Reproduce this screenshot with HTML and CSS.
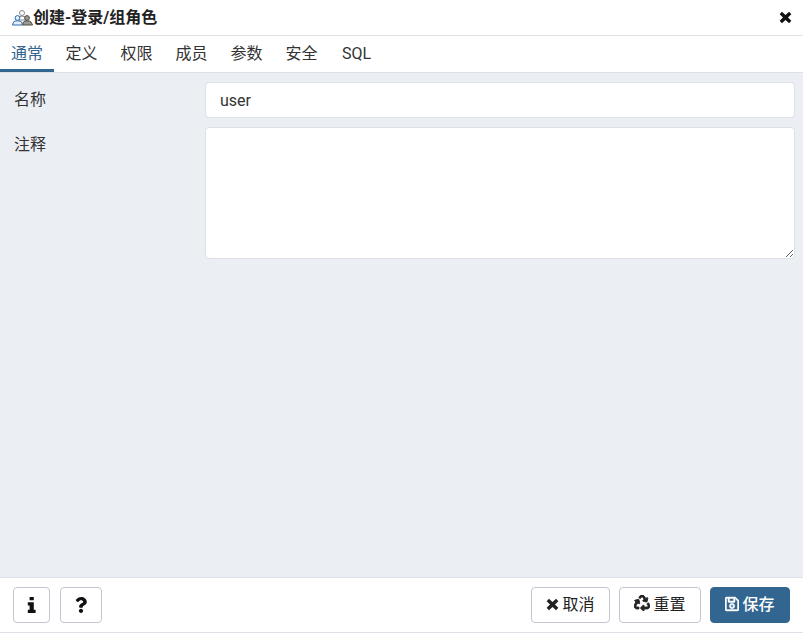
FILE: index.html
```html
<!DOCTYPE html>
<html lang="zh">
<head>
<meta charset="utf-8">
<title>创建-登录/组角色</title>
<link rel="stylesheet" href="styles.css">
</head>
<body>
<div class="dialog">
  <header class="title-bar">
    <div class="title">
      <svg class="role-icon" width="21" height="16" viewBox="0 0 21 16">
        <circle cx="10" cy="3" r="2.500" fill="#fff" stroke="#8a8a8a"/>
        <path d="M5.500 10 Q6 6 10 6 Q14 6 14.500 10Z" fill="#fff" stroke="#8a8a8a"/>
        <circle cx="5.500" cy="8" r="2.400" fill="#e3eefa" stroke="#2f6cad"/>
        <path d="M.5 15 L1.500 12 Q2.500 10.800 5.500 10.800 Q8.500 10.800 9.500 12 L10.500 15Z" fill="#e3eefa" stroke="#2f6cad"/>
        <circle cx="15" cy="8" r="2.400" fill="#9a9a8e" stroke="#4f4f49"/>
        <path d="M10.500 15 L11.500 12 Q12.500 10.800 15 10.800 Q18 10.800 19 12 L20.500 15Z" fill="#9a9a8e" stroke="#4f4f49"/>
      </svg>
      <span>创建-登录/组角色</span>
    </div>
    <svg class="close-icon" width="13" height="13" viewBox="0 0 12 12"><path d="M2.700.8 6 3.800 9.300.8 11.400 2.900 8.300 6 11.400 9.100 9.300 11.200 6 8.200 2.700 11.200.6 9.100 3.700 6 .6 2.900Z"/></svg>
  </header>
  <nav class="tabs">
    <a class="tab active">通常</a>
    <a class="tab">定义</a>
    <a class="tab">权限</a>
    <a class="tab">成员</a>
    <a class="tab">参数</a>
    <a class="tab">安全</a>
    <a class="tab">SQL</a>
  </nav>
  <main class="content">
    <div class="field">
      <label class="field-label">名称</label>
      <input class="control input" type="text" value="user">
    </div>
    <div class="field">
      <label class="field-label">注释</label>
      <textarea class="control textarea"></textarea>
    </div>
  </main>
  <footer class="footer">
    <div class="btn-group btn-group-left">
      <button class="btn info-btn"><svg width="10" height="16" viewBox="0 0 10 16"><path d="M2.600 0h4.200v3.200H2.600zM.8 5.200h6v7.600h1.800V16H.8v-3.200h1.800V8.400H.8z"/></svg></button>
      <button class="btn help-btn"><svg width="12" height="16" viewBox="0 0 384 512"><path d="M202.021 0C122.202 0 70.503 32.703 29.914 91.026c-7.363 10.58-5.093 25.086 5.178 32.874l43.138 32.709c10.373 7.865 25.132 6.026 33.253-4.148 25.049-31.381 43.63-49.449 82.757-49.449 30.764 0 68.816 19.799 68.816 49.631 0 22.552-18.617 34.134-48.993 51.164-35.423 19.86-82.299 44.576-82.299 106.405V320c0 13.255 10.745 24 24 24h72.471c13.255 0 24-10.745 24-24v-5.773c0-42.86 125.268-44.645 125.268-160.627C377.504 66.256 286.902 0 202.021 0zM192 373.459c-38.196 0-69.271 31.075-69.271 69.271 0 38.195 31.075 69.27 69.271 69.27s69.271-31.075 69.271-69.271-31.075-69.27-69.271-69.27z"/></svg></button>
    </div>
    <div class="btn-group btn-group-right">
      <button class="btn cancel-btn"><svg class="btn-icon" width="13" height="13" viewBox="0 0 12 12"><path d="M2.700.8 6 3.800 9.300.8 11.400 2.900 8.300 6 11.400 9.100 9.300 11.200 6 8.200 2.700 11.200.6 9.100 3.700 6 .6 2.900Z"/></svg><span class="btn-text">取消</span></button>
      <button class="btn reset-btn"><svg class="btn-icon recycle-icon" width="16" height="16" viewBox="0 0 512 512"><path d="M184.561 261.903c3.232 13.997-12.123 24.635-24.068 17.168l-40.736-25.455-50.867 81.402C55.606 356.273 70.96 384 96.012 384H148c6.627 0 12 5.373 12 12v40c0 6.627-5.373 12-12 12H96.115c-75.334 0-121.302-83.048-81.408-146.88l50.822-81.388-40.725-25.448c-12.081-7.547-8.966-25.961 4.879-29.158l110.237-25.45c8.611-1.988 17.201 3.381 19.189 11.99l25.452 110.237zm98.561-182.915l41.289 66.076-40.74 25.457c-12.051 7.528-9 25.953 4.879 29.158l110.237 25.45c8.672 1.999 17.215-3.438 19.189-11.99l25.45-110.237c3.197-13.844-11.99-24.719-24.068-17.168l-40.687 25.424-41.263-66.082c-37.521-60.033-125.209-60.171-162.816 0l-17.963 28.766c-3.51 5.62-1.8 13.021 3.82 16.533l33.919 21.195c5.62 3.512 13.024 1.803 16.536-3.817l17.961-28.743c12.712-20.341 41.973-19.676 54.257-.022zM497.288 301.12l-27.515-44.065c-3.511-5.623-10.916-7.334-16.538-3.821l-33.861 21.159c-5.62 3.512-7.33 10.915-3.818 16.536l27.564 44.112c13.257 21.211-2.057 48.96-27.136 48.96H320V336.02c0-14.213-17.242-21.383-27.313-11.313l-80 79.981c-6.249 6.248-6.249 16.379 0 22.627l80 79.989C302.689 517.308 320 510.3 320 495.989V448h95.88c75.274 0 121.335-82.997 81.408-146.88z"/></svg><span class="btn-text">重置</span></button>
      <button class="btn save-btn"><svg class="btn-icon save-icon" width="14" height="16" viewBox="0 0 448 512"><path d="M433.941 129.941l-83.882-83.882A48 48 0 0 0 316.118 32H48C21.49 32 0 53.49 0 80v352c0 26.51 21.49 48 48 48h352c26.51 0 48-21.49 48-48V163.882a48 48 0 0 0-14.059-33.941zM272 80v80H144V80h128zm122 352H54a6 6 0 0 1-6-6V86a6 6 0 0 1 6-6h42v104c0 13.255 10.745 24 24 24h176c13.255 0 24-10.745 24-24V83.882l78.243 78.243a6 6 0 0 1 1.757 4.243V426a6 6 0 0 1-6 6zM224 232c-48.523 0-88 39.477-88 88s39.477 88 88 88 88-39.477 88-88-39.477-88-88-88zm0 128c-22.056 0-40-17.944-40-40s17.944-40 40-40 40 17.944 40 40-17.944 40-40 40z"/></svg><span class="btn-text">保存</span></button>
    </div>
  </footer>
</div>
</body>
</html>
```
FILE: styles.css
```css
* { box-sizing: border-box; }
html, body { margin: 0; height: 100%; }
body {
  font-family: Roboto, "Noto Sans CJK SC", sans-serif;
  font-size: 16px;
  color: #222;
  background: #fff;
  overflow: hidden;
}
.dialog {
  display: flex;
  flex-direction: column;
  height: 633px;
}
.title-bar {
  flex: none;
  height: 36px;
  display: flex;
  align-items: center;
  justify-content: space-between;
  padding: 0 11px 3px 12px;
  border-bottom: 1px solid #dde0e6;
  background: #fff;
}
.title {
  display: flex;
  align-items: center;
  font-weight: 700;
  font-size: 16px;
  color: #222;
}
.role-icon { flex: none; margin-top: 3px; }
.close-icon { fill: #111; flex: none; margin-top: 3px; }
.tabs {
  flex: none;
  height: 37px;
  display: flex;
  border-bottom: 1px solid #dde0e6;
  background: #fff;
}
.tab {
  width: 55px;
  padding-top: 7px;
  font-size: 16px;
  line-height: 22px;
  color: #333;
  text-align: center;
  white-space: nowrap;
}
.tab:first-child { width: 54px; }
.tab.active {
  color: #326690;
  border-bottom: 3px solid #326690;
}
.content {
  flex: 1;
  background: #ebeef3;
  padding: 9px 8px 0 14px;
  display: flex;
  flex-direction: column;
  gap: 9px;
}
.field { display: flex; }
.field-label {
  flex: none;
  width: 191px;
  font-size: 16px;
  line-height: 36px;
  color: #333;
}
.control {
  flex: 1;
  display: block;
  min-width: 0;
  border: 1px solid #dde0e6;
  border-radius: 4px;
  background: #fff;
  font-family: Roboto, "Noto Sans CJK SC", sans-serif;
  font-size: 16px;
  color: #333;
  outline: none;
}
.input { height: 36px; padding: 0 14px; }
.textarea { height: 132px; padding: 6px 14px; resize: vertical; }
.footer {
  flex: none;
  height: 56px;
  display: flex;
  align-items: center;
  justify-content: space-between;
  padding: 0 13px 1px;
  border-top: 1px solid #dde0e6;
  border-bottom: 1px solid #dde0e6;
  background: #fff;
}
.btn-group { display: flex; }
.btn-group-left { gap: 10px; }
.btn-group-right { gap: 9px; }
.btn {
  height: 36px;
  display: flex;
  align-items: center;
  justify-content: center;
  border: 1px solid #c3c6d1;
  border-radius: 4px;
  background: #fff;
  color: #222;
  font-family: Roboto, "Noto Sans CJK SC", sans-serif;
  font-size: 16px;
  padding: 0;
}
.btn svg { fill: currentColor; flex: none; }
.btn-icon { margin-right: 3px; }
.recycle-icon { margin-bottom: 4px; stroke: currentColor; stroke-width: 28; }
.save-icon { margin-bottom: 2px; stroke: currentColor; stroke-width: 14; }
.btn-text { margin-bottom: 3px; }
.info-btn { width: 37px; color: #111; }
.help-btn { width: 42px; color: #111; }
.cancel-btn { width: 79px; }
.reset-btn { width: 82px; }
.save-btn {
  width: 80px;
  background: #326690;
  border-color: #326690;
  color: #fff;
  font-weight: 500;
}
```
